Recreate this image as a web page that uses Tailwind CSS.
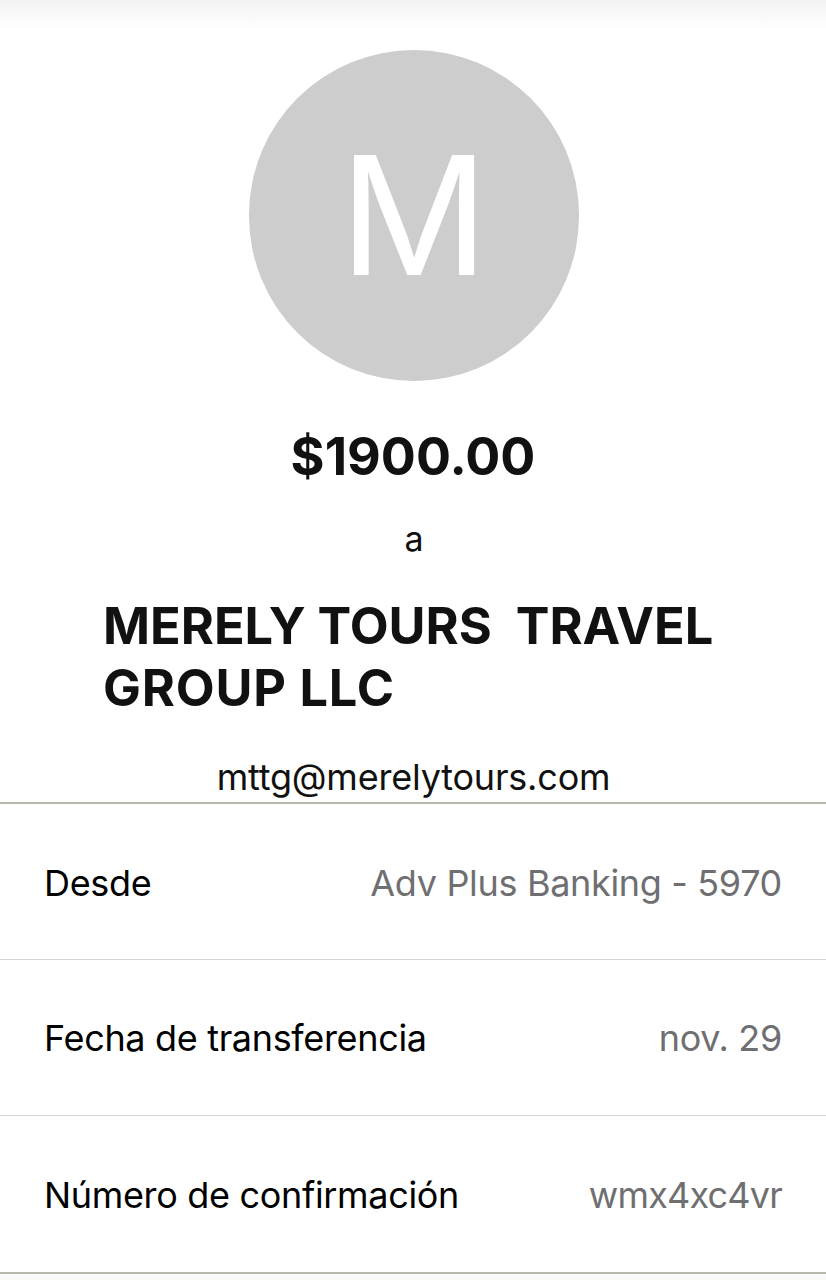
<!DOCTYPE html>
<html lang="es">
<head>
<meta charset="utf-8">
<title>Transferencia</title>
<meta name="viewport" content="width=device-width, initial-scale=1">
<script src="https://cdn.jsdelivr.net/npm/@tailwindcss/browser@4"></script>
</head>
<body class="bg-white font-['Inter','Liberation_Sans',sans-serif] text-[#111]">
  <div class="w-[826px] h-[1280px] overflow-hidden flex flex-col">
    <div class="h-[30px] bg-gradient-to-b from-[#f3f3f3] to-white"></div>

    <div class="flex justify-center mt-[20px] pl-[2px]">
      <div class="w-[330px] h-[331px] rounded-full bg-[#cdcdcd] flex items-center justify-center text-white text-[165px] font-normal leading-none">M</div>
    </div>

    <p class="text-center text-[52px] font-bold leading-[60px] mt-[46px]">$1900.00</p>
    <p class="text-center text-[34px] leading-[40px] mt-[32px] pl-[2px]">a</p>
    <h1 class="text-[50.5px] font-bold leading-[62px] mt-[36px] pl-[103px] whitespace-pre">MERELY TOURS  TRAVEL
<span class="tracking-[0.8px]">GROUP LLC</span></h1>
    <p class="text-center text-[36px] tracking-[-0.2px] leading-[44px] mt-[36px] pl-[1px]">mttg@merelytours.com</p>

    <div class="border-t-2 border-b-2 border-[#b8b8ac] mt-[3px] text-[36px] tracking-[-0.33px]">
      <div class="h-[156px] flex items-center justify-between pt-[2px] pl-[44px] pr-[44px] border-b border-[#d4d4d4]">
        <span class="text-black">Desde</span>
        <span class="text-[#6f6f72]">Adv Plus Banking - 5970</span>
      </div>
      <div class="h-[156px] flex items-center justify-between pt-[1px] pl-[44px] pr-[44px] border-b border-[#d4d4d4]">
        <span class="text-black">Fecha de transferencia</span>
        <span class="text-[#6f6f72]">nov. 29</span>
      </div>
      <div class="h-[156px] flex items-center justify-between pt-[1px] pl-[44px] pr-[44px]">
        <span class="text-black">Número de confirmación</span>
        <span class="text-[#6f6f72] tracking-[-0.8px]">wmx4xc4vr</span>
      </div>
    </div>
    <div class="grow bg-[#fafafa]"></div>
  </div>
</body>
</html>
